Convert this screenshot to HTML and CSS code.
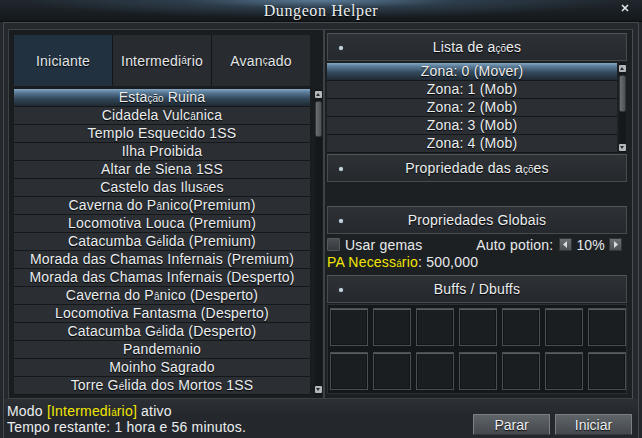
FILE: index.html
```html
<!DOCTYPE html>
<html lang="pt">
<head>
<meta charset="utf-8">
<title>Dungeon Helper</title>
<link rel="stylesheet" href="styles.css">
</head>
<body>
<div class="win">
  <header class="titlebar">
    <span class="tb-side"></span>
    <h1 class="title">Dungeon Helper</h1>
    <span class="tb-side tb-right">
      <svg class="close" width="8" height="8" viewBox="0 0 8 8"><path d="M1 1L7 7M7 1L1 7" stroke="#e8ecef" stroke-width="1.5" fill="none"/></svg>
    </span>
  </header>
  <div class="frame">
    <div class="panes">
      <section class="left">
        <div class="tabs">
          <div class="tab active">Iniciante</div>
          <div class="tab">Intermedi<span class="sm">á</span>rio</div>
          <div class="tab">Avan<span class="sm">ç</span>ado</div>
        </div>
        <div class="listwrap">
          <ul class="list">
            <li class="sel">Esta<span class="sm">ção</span> Ruina</li>
            <li>Cidadela Vulc<span class="sm">â</span>nica</li>
            <li>Templo Esquecido 1SS</li>
            <li>Ilha Proibida</li>
            <li>Altar de Siena 1SS</li>
            <li>Castelo das Ilus<span class="sm">õ</span>es</li>
            <li>Caverna do P<span class="sm">â</span>nico(Premium)</li>
            <li>Locomotiva Louca (Premium)</li>
            <li>Catacumba G<span class="sm">é</span>lida (Premium)</li>
            <li>Morada das Chamas Infernais (Premium)</li>
            <li>Morada das Chamas Infernais (Desperto)</li>
            <li>Caverna do P<span class="sm">â</span>nico (Desperto)</li>
            <li>Locomotiva Fantasma (Desperto)</li>
            <li>Catacumba G<span class="sm">é</span>lida (Desperto)</li>
            <li>Pandem<span class="sm">ô</span>nio</li>
            <li>Moinho Sagrado</li>
            <li>Torre G<span class="sm">é</span>lida dos Mortos 1SS</li>
          </ul>
          <div class="scroll">
            <div class="sbtn up"></div>
            <div class="thumb tall"></div>
            <div class="sfill"></div>
            <div class="sbtn down"></div>
          </div>
        </div>
      </section>
      <section class="right">
        <div class="hdr"><span class="dot"></span>Lista de a<span class="sm">çõ</span>es</div>
        <div class="listwrap rlist">
          <ul class="list">
            <li class="sel">Zona: 0 (Mover)</li>
            <li>Zona: 1 (Mob)</li>
            <li>Zona: 2 (Mob)</li>
            <li>Zona: 3 (Mob)</li>
            <li>Zona: 4 (Mob)</li>
          </ul>
          <div class="scroll">
            <div class="sbtn up"></div>
            <div class="thumb"></div>
            <div class="sfill"></div>
            <div class="sbtn down"></div>
          </div>
        </div>
        <div class="hdr h2"><span class="dot"></span>Propriedade das a<span class="sm">çõ</span>es</div>
        <div class="props"></div>
        <div class="hdr"><span class="dot"></span>Propriedades Globais</div>
        <div class="opts">
          <label class="chk"><span class="box"></span>Usar gemas</label>
          <div class="potion">Auto potion:
            <span class="arr"><svg width="5" height="7" viewBox="0 0 5 7"><path d="M4 0L0 3.5L4 7Z" fill="#d8dcdf"/></svg></span>
            <span class="pct">10%</span>
            <span class="arr"><svg width="5" height="7" viewBox="0 0 5 7"><path d="M1 0L5 3.5L1 7Z" fill="#d8dcdf"/></svg></span>
          </div>
        </div>
        <div class="pa"><span class="yel">PA Necess<span class="sm">á</span>rio</span>: 500,000</div>
        <div class="hdr h4"><span class="dot"></span>Buffs / Dbuffs</div>
        <div class="grid">
          <div class="cell"></div><div class="cell"></div><div class="cell"></div><div class="cell"></div><div class="cell"></div><div class="cell"></div><div class="cell"></div>
          <div class="cell"></div><div class="cell"></div><div class="cell"></div><div class="cell"></div><div class="cell"></div><div class="cell"></div><div class="cell"></div>
        </div>
      </section>
    </div>
    <footer class="status">
      <div class="stext">
        <div>Modo <span class="yel">[Intermedi<span class="sm">á</span>rio]</span> ativo</div>
        <div>Tempo restante: 1 hora e 56 minutos.</div>
      </div>
      <div class="btns">
        <button class="btn">Parar</button>
        <button class="btn">Iniciar</button>
      </div>
    </footer>
  </div>
</div>
</body>
</html>
```

FILE: styles.css
```css
* { box-sizing: border-box; }
html, body { margin: 0; padding: 0; }
body {
  width: 642px; height: 438px; overflow: hidden;
  background: #24282c;
  font-family: "Liberation Sans", Arial, sans-serif;
  font-size: 14px;
  letter-spacing: 0.2px;
  color: #e8eaec;
}
.win { width: 642px; height: 438px; display: flex; flex-direction: column; }

.titlebar {
  height: 22px; flex: none;
  display: grid; grid-template-columns: 1fr auto 1fr; align-items: center;
  background:
    radial-gradient(ellipse 300px 18px at 50% 0%, rgba(110,150,185,0.75) 0%, rgba(60,85,108,0.5) 45%, rgba(20,26,31,0) 100%),
    linear-gradient(#20272d, #14181b);
  border-bottom: 1px solid #0c0e10;
}
.title {
  margin: 0; font-family: "Liberation Serif", "Times New Roman", serif;
  font-weight: normal; font-size: 16px; letter-spacing: 0.6px;
  color: #eef0f2; text-shadow: 0 1px 1px #000; line-height: 22px;
}
.tb-right { display: flex; justify-content: flex-end; padding-right: 13px; }
.close { display: block; margin-top: -6px; }

.frame {
  flex: 1; display: flex; flex-direction: column;
  margin: 0 3px; border: 1px solid #464b50; border-bottom: none;
  background: #25292d;
}
.panes { display: flex; padding: 6px 5px 0 4px; }

.left {
  width: 316px; height: 370px;
  border: 1px solid #3d4247; background: #1a1d20;
  padding: 5px 0 0 5px;
}
.tabs { display: grid; grid-template-columns: 98px 99px 99px; width: 296px; height: 51px; }
.tab {
  display: flex; align-items: center; justify-content: center;
  background: #282c31; border-left: 1px solid #14171a;
  color: #e4e7ea; text-shadow: 0 1px 1px #000;
}
.tab:first-child { border-left: none; }
.tab.active { background: #213140; }

.sm { font-size: 10px; letter-spacing: 0; }

.listwrap { display: flex; margin-top: 3px; }
.list { list-style: none; margin: 0; padding: 0; width: 296px; }
.list li {
  height: 18px; line-height: 17px; text-align: center;
  background: #2b2f34; border-bottom: 1px solid #15181b;
  color: #eceef0; text-shadow: 0 1px 1px #000; white-space: nowrap;
}
.list li.sel {
  background: linear-gradient(#86a8c4 0%, #5c7f9c 18%, #34495b 55%, #1f2a33 100%);
}
.scroll {
  width: 7px; margin-left: 5px; display: flex; flex-direction: column;
  background: #15181b;
}
.sbtn { height: 7px; background: #b4b8bc; border-radius: 1px; position: relative; margin-top: 2px; }
.sbtn.up::after, .sbtn.down::after {
  content: ""; position: absolute; left: 1px; border-left: 2.5px solid transparent; border-right: 2.5px solid transparent;
}
.sbtn.up::after { top: 2px; border-bottom: 3px solid #2a2d30; }
.sbtn.down::after { top: 2px; border-top: 3px solid #2a2d30; }
.sbtn.down { margin: 0 0 2px 0; }
.thumb {
  height: 38px; margin-top: 3px;
  background: linear-gradient(90deg, #6a6e72, #4e5256);
  border: 1px solid #33373b; border-radius: 2px;
}
.thumb.tall { height: 36px; }
.sfill { flex: 1; }

.right {
  width: 309px; height: 370px;
  border: 1px solid #3d4247; border-right-color: #4a4f54; background: #1d2023;
  padding: 3px 5px 0 2px;
}
.hdr {
  position: relative; height: 28px; line-height: 26px; text-align: center;
  background: linear-gradient(#2e3237, #25292d);
  border: 1px solid #474b50; border-top-color: #50555a;
  color: #eceef0; text-shadow: 0 1px 1px #000;
}
.dot {
  position: absolute; left: 11px; top: 12px; width: 4px; height: 4px; border-radius: 50%;
  background: #c5d3df; box-shadow: 0 0 1px #8aa;
}
.rlist { margin-top: 2px; }
.rlist .list { width: 290px; }
.rlist .scroll { margin-left: 2px; }
.rlist .thumb { height: 37px; }
.h2 { margin-top: 1px; }
.props { height: 24px; }
.opts { display: flex; justify-content: space-between; align-items: center; height: 17px; margin-top: 2px; }
.chk { display: flex; align-items: center; gap: 5px; }
.box {
  width: 13px; height: 13px; border: 1px solid #55595d;
  background: linear-gradient(#4a4e52, #36393d); border-radius: 1px;
}
.potion { display: flex; align-items: center; margin-right: 5px; }
.arr {
  width: 13px; height: 13px; margin-left: 6px;
  background: linear-gradient(#6b6f73, #4d5155); border: 1px solid #34373a;
  display: flex; align-items: center; justify-content: center;
}
.pct { margin-left: 4px; margin-right: -2px; }
.pa { height: 17px; line-height: 17px; margin-top: 1px; }
.yel { color: #f2e600; }
.h4 { margin-top: 4px; }
.grid {
  margin-top: 1px; width: 300px;
  display: grid; grid-template-columns: repeat(7, 38px); gap: 6px 5px;
  padding: 3px 2px; border: 1px solid #2c3034; background: #15181a;
}
.cell {
  width: 38px; height: 38px; background: #1b1e21;
  border: 1px solid #4a4e52; box-shadow: inset 0 1px 0 #5a5e62, inset 0 0 0 1px #121416;
}

.status {
  flex: 1; display: flex; justify-content: space-between; align-items: flex-end;
  padding: 0 6px 5px 3px;
  background: linear-gradient(#2c3034, #24282c 40%);
}
.stext { align-self: flex-start; padding-top: 5px; line-height: 15px; color: #eceef0; }
.btns { display: flex; gap: 5px; }
.btn {
  width: 77px; height: 21px; padding: 0;
  font-family: "Liberation Sans", Arial, sans-serif; font-size: 14px; color: #eef0f2;
  background: linear-gradient(#5f6469, #45494d);
  border: 1px solid #7b8085; border-bottom-color: #35383b; border-radius: 1px;
  text-shadow: 0 1px 1px #000;
}
```
